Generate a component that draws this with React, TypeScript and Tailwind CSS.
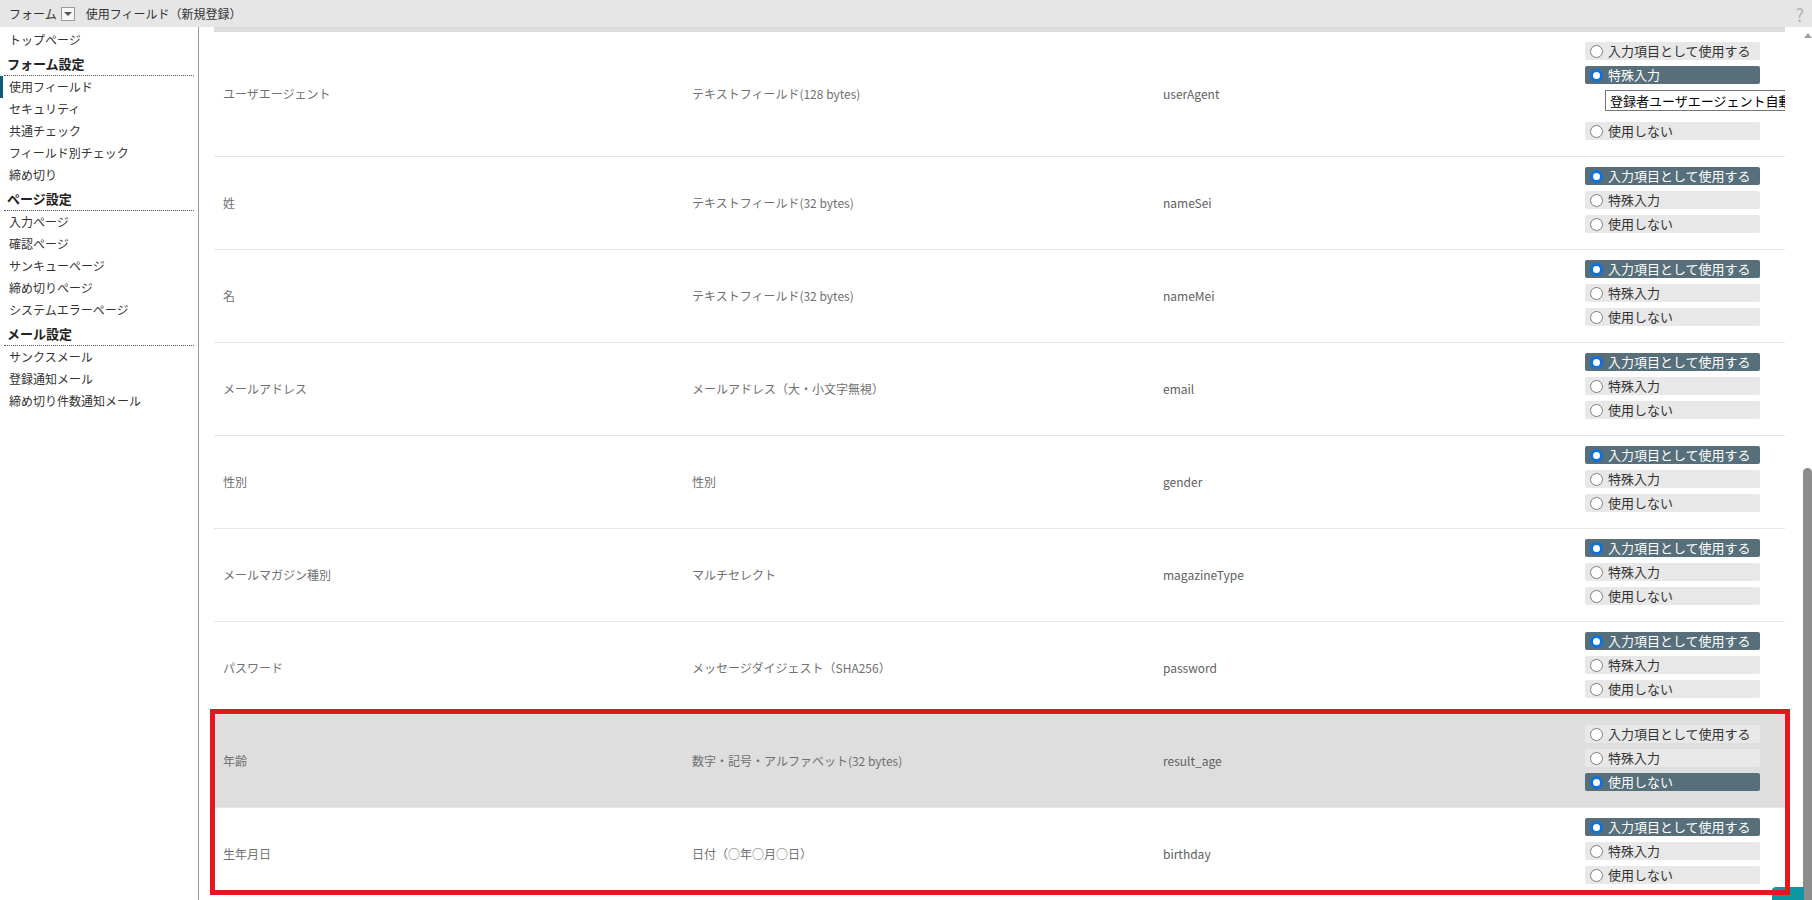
import React from "react";

type Choice = "input" | "special" | "none";

type FieldRow = {
  label: string;
  type: string;
  name: string;
  choice: Choice;
  highlight?: boolean;
  specialValue?: string;
};

const ROWS: FieldRow[] = [
  { label: "ユーザエージェント", type: "テキストフィールド(128 bytes)", name: "userAgent", choice: "special", specialValue: "登録者ユーザエージェント自動取得" },
  { label: "姓", type: "テキストフィールド(32 bytes)", name: "nameSei", choice: "input" },
  { label: "名", type: "テキストフィールド(32 bytes)", name: "nameMei", choice: "input" },
  { label: "メールアドレス", type: "メールアドレス（大・小文字無視）", name: "email", choice: "input" },
  { label: "性別", type: "性別", name: "gender", choice: "input" },
  { label: "メールマガジン種別", type: "マルチセレクト", name: "magazineType", choice: "input" },
  { label: "パスワード", type: "メッセージダイジェスト（SHA256）", name: "password", choice: "input" },
  { label: "年齢", type: "数字・記号・アルファベット(32 bytes)", name: "result_age", choice: "none", highlight: true },
  { label: "生年月日", type: "日付（○年○月○日）", name: "birthday", choice: "input" },
];

// sidebar menu, grouped by heading
const MENU: { heading?: string; items: string[] }[] = [
  { items: ["トップページ"] },
  { heading: "フォーム設定", items: ["使用フィールド", "セキュリティ", "共通チェック", "フィールド別チェック", "締め切り"] },
  { heading: "ページ設定", items: ["入力ページ", "確認ページ", "サンキューページ", "締め切りページ", "システムエラーページ"] },
  { heading: "メール設定", items: ["サンクスメール", "登録通知メール", "締め切り件数通知メール"] },
];

function Option({ label, on }: { label: string; on: boolean }) {
  return (
    <div
      className={
        on
          ? "flex h-[18px] w-[175px] items-center rounded-[2px] bg-[#566f7a] pl-[5px] text-[13px] leading-[18px] text-white"
          : "flex h-[18px] w-[175px] items-center rounded-[2px] bg-[#e8e8e8] pl-[5px] text-[13px] leading-[18px] text-[#333]"
      }
    >
      <span
        className={
          on
            ? "h-[13px] w-[13px] shrink-0 rounded-full border-[3px] border-[#0b72df] bg-white"
            : "h-[13px] w-[13px] shrink-0 rounded-full border border-[#7d7d7d] bg-white"
        }
      />
      <span className="ml-[5px] whitespace-nowrap">{label}</span>
    </div>
  );
}

function Row({ row }: { row: FieldRow }) {
  return (
    <div
      className={
        row.highlight
          ? "grid grid-cols-[461px_471px_422px_minmax(0,1fr)] border-b border-[#e6e6e6] bg-[#dedede]"
          : "grid grid-cols-[461px_471px_422px_minmax(0,1fr)] border-b border-[#e6e6e6]"
      }
    >
      <div className="flex items-center pl-[9px] text-[12px] text-[#707070]">{row.label}</div>
      <div className="flex items-center pl-[17px] text-[12px] text-[#707070]">{row.type}</div>
      <div className="flex items-center pl-[17px] text-[12px] text-[#606060]">{row.name}</div>
      <div className="flex flex-col pl-[17px] pt-[10px] pb-[16px]">
        <Option label="入力項目として使用する" on={row.choice === "input"} />
        <div className="mt-[6px]">
          <Option label="特殊入力" on={row.choice === "special"} />
        </div>
        {row.specialValue && (
          <input
            readOnly
            value={row.specialValue}
            className="mt-[6px] ml-[20px] h-[21px] w-[240px] shrink-0 border border-[#767676] bg-white pl-[4px] text-[13px] text-black outline-none"
          />
        )}
        <div className={row.specialValue ? "mt-[11px]" : "mt-[6px]"}>
          <Option label="使用しない" on={row.choice === "none"} />
        </div>
      </div>
    </div>
  );
}

export default function App() {
  return (
    <div className="relative h-[900px] w-[1812px] overflow-hidden bg-white font-['Noto_Sans_CJK_JP','Liberation_Sans',sans-serif] text-[#333]">
      {/* title bar */}
      <div className="flex h-[27px] items-center bg-[#e6e6e6] pl-[9px] pr-[8px] text-[12px] text-[#333]">
        <span>フォーム</span>
        <span className="ml-[4px] flex h-[14px] w-[14px] items-center justify-center border border-[#9a9a9a] bg-[#f6f6f6]">
          <span className="h-0 w-0 border-x-[4px] border-t-[4px] border-x-transparent border-t-[#555]" />
        </span>
        <span className="ml-[11px]">使用フィールド（新規登録）</span>
        <span className="ml-auto text-[18px] leading-none text-[#b3b3b3]">?</span>
      </div>

      <div className="flex h-[873px]">
        {/* side menu */}
        <nav className="w-[199px] shrink-0 border-r border-[#999] pt-[2px]">
          {MENU.map((group, gi) => (
            <div key={gi}>
              {group.heading && (
                <div className="mx-[4px] mt-[2px] h-[23px] border-b border-dotted border-[#555] pl-[3px] text-[13px] leading-[22px] font-bold text-[#222]">
                  {group.heading}
                </div>
              )}
              {group.items.map((item) =>
                item === "使用フィールド" ? (
                  <div key={item} className="h-[22px] border-l-[3px] border-[#0f5b78] pl-[6px] text-[12px] leading-[22px] text-[#333]">
                    {item}
                  </div>
                ) : (
                  <div key={item} className="h-[22px] pl-[9px] text-[12px] leading-[22px] text-[#333]">
                    {item}
                  </div>
                )
              )}
            </div>
          ))}
        </nav>

        {/* field list */}
        <main className="ml-[15px] w-[1571px] shrink-0 overflow-hidden">
          <div className="h-[5px] bg-[#dcdcdc]" />
          {ROWS.map((r) => (
            <Row key={r.name} row={r} />
          ))}
        </main>

        {/* scrollbar */}
        <div className="flex w-[27px] shrink-0 justify-end">
          <div className="flex w-[9px] flex-col items-center">
            <span className="mt-[6px] h-0 w-0 border-x-[4px] border-b-[5px] border-x-transparent border-b-[#a0a0a0]" />
            <div className="mt-auto h-[432px] w-[9px] rounded-t-full bg-[#8c8c8c]" />
          </div>
        </div>
      </div>

      {/* corner widget */}
      <div className="absolute left-[1772px] top-[887px] h-[13px] w-[32px] rounded-tl-[4px] bg-[#0e96a3]" />
      {/* annotation frame */}
      <div className="absolute left-[210px] top-[709px] h-[186px] w-[1580px] border-[5px] border-[#e4161e]" />
    </div>
  );
}
